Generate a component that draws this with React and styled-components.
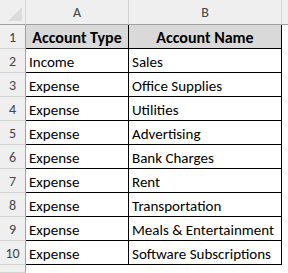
import React from 'react';
import styled, { createGlobalStyle } from 'styled-components';

const rows = [
  ['Account Type', 'Account Name'],
  ['Income', 'Sales'],
  ['Expense', 'Office Supplies'],
  ['Expense', 'Utilities'],
  ['Expense', 'Advertising'],
  ['Expense', 'Bank Charges'],
  ['Expense', 'Rent'],
  ['Expense', 'Transportation'],
  ['Expense', 'Meals & Entertainment'],
  ['Expense', 'Software Subscriptions'],
];

const App = () => {
  return (
    <>
      <GlobalStyle />
      <Sheet>
        <Corner>
          <CornerMark />
        </Corner>
        <ColHead>A</ColHead>
        <ColHead>B</ColHead>
        <ColHead $last />
        {rows.map((r, i) => (
          <React.Fragment key={i}>
            <RowHead>{i + 1}</RowHead>
            <Cell $head={i === 0}>{r[0]}</Cell>
            <Cell $head={i === 0}>{r[1]}</Cell>
            <Blank />
          </React.Fragment>
        ))}
        <RowHead />
        <Blank />
        <Blank />
        <Blank />
      </Sheet>
    </>
  );
};

const GlobalStyle = createGlobalStyle`
  html, body {
    margin: 0;
    padding: 0;
    background: #ffffff;
  }
`;

const Sheet = styled.div`
  width: 288px;
  height: 273px;
  overflow: hidden;
  display: grid;
  grid-template-columns: 26px 103px 153px 1fr;
  grid-template-rows: 25px repeat(10, 24px) 1fr;
  font-family: Calibri, Carlito, 'Liberation Sans', sans-serif;
  background: #ffffff;
`;

const Corner = styled.div`
  background: #efefef;
  border-right: 1px solid #d4d4d4;
  border-bottom: 1px solid #a0a0a0;
  display: flex;
  align-items: flex-end;
  justify-content: flex-end;
  padding: 0 3px 3px 0;
`;

const CornerMark = styled.div`
  width: 0;
  height: 0;
  border-left: 14px solid transparent;
  border-bottom: 14px solid #dcdcdc;
`;

const ColHead = styled.div`
  background: #efefef;
  border-right: ${(p) => (p.$last ? 'none' : '1px solid #d4d4d4')};
  border-bottom: 1px solid #a0a0a0;
  color: #444444;
  font-size: 14px;
  display: flex;
  align-items: center;
  justify-content: center;
  padding-top: 1px;
`;

const RowHead = styled.div`
  background: #efefef;
  border-right: 1px solid #a0a0a0;
  border-bottom: 1px solid #d4d4d4;
  color: #444444;
  font-size: 14px;
  display: flex;
  align-items: center;
  justify-content: center;
  padding-top: 2px;
`;

const Cell = styled.div`
  background: ${(p) => (p.$head ? '#d9d9d9' : '#ffffff')};
  border-right: 1px solid #000000;
  border-bottom: 1px solid #000000;
  color: #000000;
  font-size: ${(p) => (p.$head ? '16px' : '15px')};
  font-weight: ${(p) => (p.$head ? 700 : 400)};
  display: flex;
  align-items: center;
  justify-content: ${(p) => (p.$head ? 'center' : 'flex-start')};
  padding: 2px 3px 0;
  white-space: nowrap;
  overflow: hidden;
`;

const Blank = styled.div`
  background: #ffffff;
`;

export default App;
